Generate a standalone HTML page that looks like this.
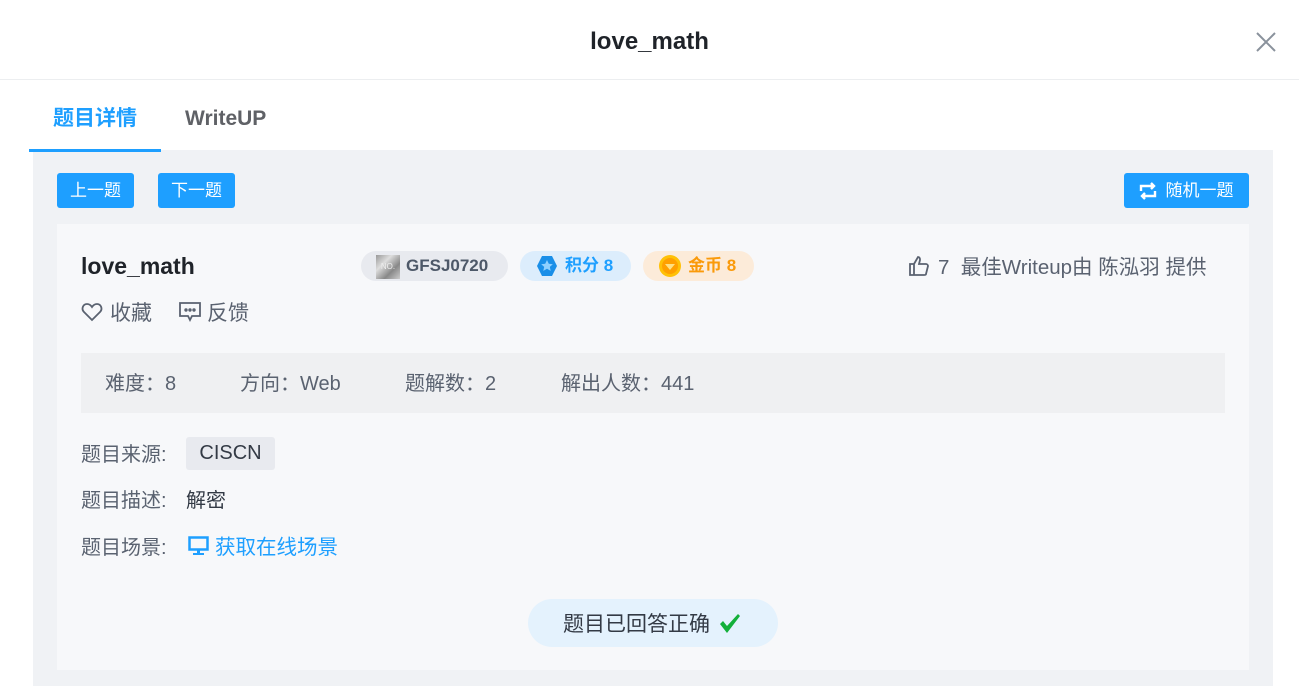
<!DOCTYPE html>
<html><head><meta charset="utf-8"><style>
*{margin:0;padding:0;box-sizing:border-box}
body{width:1299px;height:686px;background:#fff;font-family:"Liberation Sans","Noto Sans CJK SC",sans-serif;position:relative;overflow:hidden;color:#333}
.a{position:absolute;white-space:nowrap}
.btn{position:absolute;background:#1e9fff;color:#fff;font-size:17px;border-radius:3px;text-align:center;line-height:35px;height:35px}
.pill{position:absolute;height:30px;border-radius:15px;font-size:17px;font-weight:bold;line-height:30px;top:251px}
.lbl{color:#5a6270;font-size:20px;line-height:24px}
</style></head><body>
<div class="a" style="left:0;top:28px;width:1299px;text-align:center;font-size:24px;line-height:28px;font-weight:bold;color:#1f2329">love_math</div>
<svg class="a" style="left:1255px;top:31px" width="22" height="22" viewBox="0 0 22 22"><path d="M2 2L20 20M20 2L2 20" stroke="#8a929c" stroke-width="2"/></svg>
<div class="a" style="left:0;top:79px;width:1299px;height:1px;background:#eceef0"></div>
<div class="a" style="left:53px;top:106px;font-size:21px;line-height:26px;font-weight:bold;color:#1e9fff">题目详情</div>
<div class="a" style="left:185px;top:106px;font-size:21px;line-height:26px;font-weight:bold;color:#5f6166">WriteUP</div>
<div class="a" style="left:33px;top:150px;width:1240px;height:536px;background:#f0f2f5"></div>
<div class="a" style="left:29px;top:149px;width:132px;height:3px;background:#1e9fff"></div>
<div class="btn" style="left:57px;top:173px;width:77px">上一题</div>
<div class="btn" style="left:158px;top:173px;width:77px">下一题</div>
<div class="btn" style="left:1124px;top:173px;width:125px;padding-left:26px">随机一题</div>
<svg class="a" style="left:1138px;top:181px" width="20" height="20" viewBox="0 0 20 20" fill="none" stroke="#fff" stroke-width="2.4"><path d="M3 10V5h13M13 2l3 3-3 3M17 10v5H4M7 18l-3-3 3-3"/></svg>
<div class="a" style="left:57px;top:224px;width:1192px;height:446px;background:#f7f8fa"></div>
<div class="a" style="left:81px;top:253px;font-size:23px;line-height:26px;font-weight:bold;color:#1f2329">love_math</div>
<div class="pill" style="left:361px;width:147px;background:#e8eaef;color:#4e5969;padding-left:45px">GFSJ0720</div>
<div class="a" style="left:376px;top:255px;width:24px;height:24px;background:linear-gradient(135deg,#999,#ddd,#888,#ccc);font-size:8px;color:#eee;text-align:center;line-height:24px">NO.</div>
<div class="pill" style="left:520px;width:111px;background:#dcedfc;color:#1e9fff;padding-left:45px">积分 8</div>
<svg class="a" style="left:535px;top:254px" width="24" height="24" viewBox="0 0 24 24"><path d="M7 2h10l5 10-5 10H7L2 12z" fill="#1a8fe8"/><path d="M12 6l1.8 3.8 4 .4-3 2.7.9 4-3.7-2.1-3.7 2.1.9-4-3-2.7 4-.4z" fill="#8fd0ff"/></svg>
<div class="pill" style="left:643px;width:111px;background:#fcebd9;color:#fa9a0a;padding-left:45px">金币 8</div>
<svg class="a" style="left:658px;top:254px" width="24" height="24" viewBox="0 0 24 24"><circle cx="12" cy="12" r="11" fill="#ffc107"/><circle cx="12" cy="12" r="8" fill="#ffa000"/><path d="M7 10h10l-5 6z" fill="#ffe082"/></svg>
<svg class="a" style="left:908px;top:255px" width="22" height="22" viewBox="0 0 22 22" fill="none" stroke="#5a6270" stroke-width="1.8"><path d="M2 9h4v11H2zM6 9l4-7c2 0 2 2 2 3l-1 4h7c1 0 2 1 2 2l-2 8c0 1-1 1-2 1H6"/></svg>
<div class="a" style="left:938px;top:256px;font-size:20.5px;line-height:24px;color:#5a6270">7&nbsp;&nbsp;最佳Writeup由 陈泓羽 提供</div>
<svg class="a" style="left:81px;top:302px" width="22" height="20" viewBox="0 0 22 20" fill="none" stroke="#5a6270" stroke-width="1.8"><path d="M11 18L3 10C0 7 2 2 6 2c2 0 4 1.5 5 3 1-1.5 3-3 5-3 4 0 6 5 3 8z"/></svg>
<div class="a lbl" style="left:110px;top:302px;font-size:21px">收藏</div>
<svg class="a" style="left:179px;top:302px" width="22" height="20" viewBox="0 0 22 20" fill="none" stroke="#5a6270" stroke-width="1.8"><path d="M1 1h20v13h-8l-2 4-2-4H1z"/><circle cx="7" cy="8" r=".8" fill="#5a6270"/><circle cx="11" cy="8" r=".8" fill="#5a6270"/><circle cx="15" cy="8" r=".8" fill="#5a6270"/></svg>
<div class="a lbl" style="left:207px;top:302px;font-size:21px">反馈</div>
<div class="a" style="left:81px;top:353px;width:1144px;height:60px;background:#eff0f2"></div>
<div class="a lbl" style="left:105px;top:372px">难度：8</div>
<div class="a lbl" style="left:240px;top:372px">方向：Web</div>
<div class="a lbl" style="left:405px;top:372px">题解数：2</div>
<div class="a lbl" style="left:561px;top:372px">解出人数：441</div>
<div class="a lbl" style="left:81px;top:443px">题目来源:</div>
<div class="a" style="left:186px;top:437px;width:89px;height:33px;background:#e8eaef;border-radius:3px;text-align:center;line-height:33px;font-size:20px;color:#333a45">CISCN</div>
<div class="a lbl" style="left:81px;top:489px">题目描述:</div>
<div class="a" style="left:186px;top:489px;font-size:20px;line-height:24px;color:#333a45">解密</div>
<div class="a lbl" style="left:81px;top:536px">题目场景:</div>
<svg class="a" style="left:188px;top:536px" width="21" height="20" viewBox="0 0 21 20"><rect x="1.5" y="1.5" width="18" height="12" fill="none" stroke="#1e9fff" stroke-width="2.5"/><rect x="9" y="14" width="3" height="3" fill="#1e9fff"/><rect x="5" y="17" width="11" height="2" fill="#1e9fff"/></svg>
<div class="a" style="left:215px;top:536px;font-size:20.5px;line-height:24px;color:#1e9fff">获取在线场景</div>
<div class="a" style="left:528px;top:599px;width:250px;height:48px;border-radius:24px;background:#e4f2fd"></div>
<div class="a" style="left:563px;top:612px;font-size:21px;line-height:25px;color:#333a45">题目已回答正确</div>
<svg class="a" style="left:719px;top:612px" width="22" height="22" viewBox="0 0 22 22"><path d="M1 12l3-3 4 5L19 2l2 2L8 21z" fill="#13b03a"/></svg>
</body></html>
